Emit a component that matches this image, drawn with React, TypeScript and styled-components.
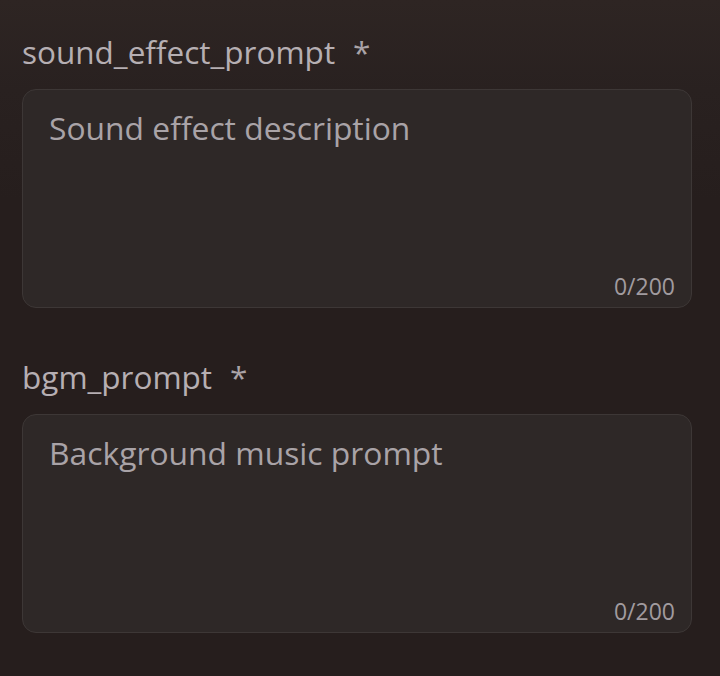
import React from "react";
import styled, { createGlobalStyle } from "styled-components";

const Global = createGlobalStyle`
  html, body { margin: 0; padding: 0; }
  body {
    background: linear-gradient(180deg, #2e2523 0px, #292120 90px, #261e1d 200px, #261e1d 100%);
    min-height: 676px;
    font-family: "Open Sans", "Noto Sans", sans-serif;
  }
`;

const Page = styled.div`
  display: flex;
  flex-direction: column;
  gap: 49px;
  padding: 32px 28px 0 22px;
`;

const Field = styled.div`
  display: flex;
  flex-direction: column;
  gap: 17px;
`;

const Label = styled.label`
  display: flex;
  gap: 18px;
  font-size: 31.5px;
  line-height: 40px;
  color: #b6afb3;
`;

const Star = styled.span`
  color: #aaa3a7;
`;

const Box = styled.div`
  display: flex;
  flex-direction: column;
  height: 219px;
  box-sizing: border-box;
  border: 1px solid #3d3736;
  border-radius: 14px;
  background: #2e2827;
`;

const Area = styled.textarea`
  flex: 1;
  resize: none;
  border: none;
  outline: none;
  background: transparent;
  padding: 18px 26px 0;
  font-family: "Open Sans", "Noto Sans", sans-serif;
  font-size: 31.8px;
  line-height: 40px;
  color: #c9c3c6;
  &::placeholder { color: #a9a3a7; opacity: 1; }
`;

const Counter = styled.div`
  text-align: right;
  padding: 0 16px 8px;
  font-size: 23px;
  line-height: 26px;
  color: #a19b9f;
`;

const fields = [
  { name: "sound_effect_prompt", placeholder: "Sound effect description" },
  { name: "bgm_prompt", placeholder: "Background music prompt" },
];

export default function App() {
  return (
    <>
      <Global />
      <Page>
        {fields.map((f) => (
          <Field key={f.name}>
            <Label>
              <span>{f.name}</span>
              <Star>*</Star>
            </Label>
            <Box>
              <Area placeholder={f.placeholder} />
              <Counter>0/200</Counter>
            </Box>
          </Field>
        ))}
      </Page>
    </>
  );
}
